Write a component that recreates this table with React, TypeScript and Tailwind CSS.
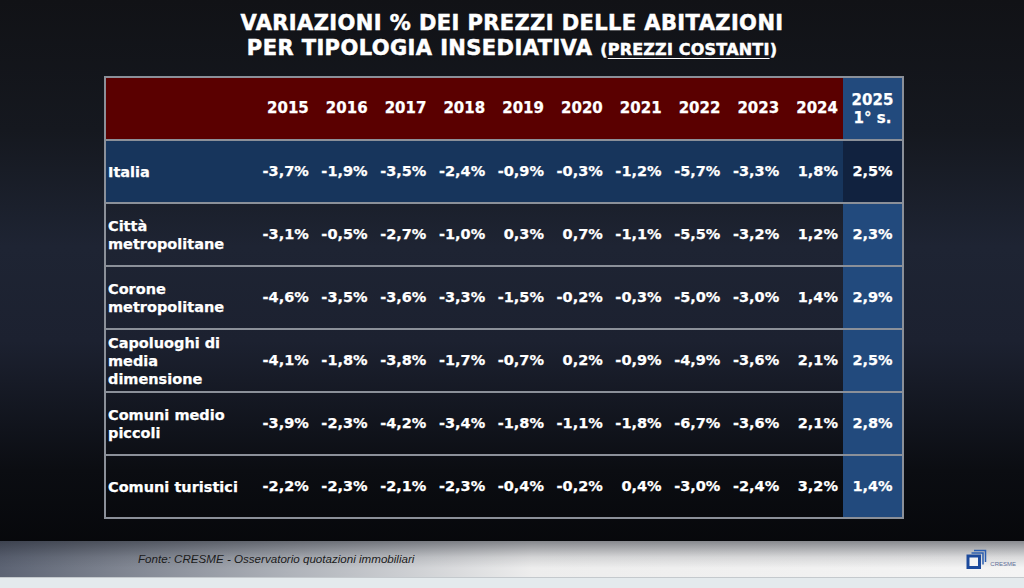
const years = ["2015", "2016", "2017", "2018", "2019", "2020", "2021", "2022", "2023", "2024"];

type Row = { label: React.ReactNode; values: string[]; last: string; highlight?: boolean };

const rows: Row[] = [
  { label: "Italia", values: ["-3,7%", "-1,9%", "-3,5%", "-2,4%", "-0,9%", "-0,3%", "-1,2%", "-5,7%", "-3,3%", "1,8%"], last: "2,5%", highlight: true },
  { label: <>Città<br />metropolitane</>, values: ["-3,1%", "-0,5%", "-2,7%", "-1,0%", "0,3%", "0,7%", "-1,1%", "-5,5%", "-3,2%", "1,2%"], last: "2,3%" },
  { label: <>Corone<br />metropolitane</>, values: ["-4,6%", "-3,5%", "-3,6%", "-3,3%", "-1,5%", "-0,2%", "-0,3%", "-5,0%", "-3,0%", "1,4%"], last: "2,9%" },
  { label: <>Capoluoghi di<br />media<br />dimensione</>, values: ["-4,1%", "-1,8%", "-3,8%", "-1,7%", "-0,7%", "0,2%", "-0,9%", "-4,9%", "-3,6%", "2,1%"], last: "2,5%" },
  { label: <>Comuni medio<br />piccoli</>, values: ["-3,9%", "-2,3%", "-4,2%", "-3,4%", "-1,8%", "-1,1%", "-1,8%", "-6,7%", "-3,6%", "2,1%"], last: "2,8%" },
  { label: "Comuni turistici", values: ["-2,2%", "-2,3%", "-2,1%", "-2,3%", "-0,4%", "-0,2%", "0,4%", "-3,0%", "-2,4%", "3,2%"], last: "1,4%" },
];

function CresmeLogo() {
  return (
    <div className="flex items-end gap-[3px]">
      <svg width="21" height="20" viewBox="0 0 21 20">
        <path d="M8 1.5 H19.5 V13" fill="none" stroke="#2a5db0" strokeWidth="1.5" />
        <path d="M5.5 4 H17 V15.5" fill="none" stroke="#2a5db0" strokeWidth="1.5" />
        <rect x="2" y="7" width="11.5" height="11.5" fill="#f4f4f4" stroke="#1c4a9c" strokeWidth="3" />
      </svg>
      <span className="mb-[2px] font-['Liberation_Sans',sans-serif] text-[6px] leading-none text-[#5f6f98]">CRESME</span>
    </div>
  );
}

export default function App() {
  return (
    <div className="flex h-[588px] w-[1024px] flex-col bg-[linear-gradient(180deg,#111216_0%,#15181f_22%,#1e2433_42%,#1c2130_58%,#0b0d12_80%,#040507_100%)] font-['DejaVu_Sans',sans-serif] text-white">
      <div className="pt-[11px] text-center text-[21px] font-bold leading-[25px] tracking-[0.4px] [-webkit-text-stroke:0.5px_#fff]">
        <div>VARIAZIONI % DEI PREZZI DELLE ABITAZIONI</div>
        <div>
          PER TIPOLOGIA INSEDIATIVA <span className="text-[16px] tracking-[0.2px]">(<span className="underline decoration-1 underline-offset-[3px]">PREZZI COSTANTI</span>)</span>
        </div>
      </div>

      <div className="ml-[104px] mt-[14px] w-[800px] border-2 border-[#8b9099] [-webkit-text-stroke:0.25px_#fff]">
        <div className="grid h-[61px] grid-cols-[149px_repeat(10,1fr)_59px] text-[15px] font-bold">
          <div className="bg-[#5a0000]" />
          {years.map((y) => (
            <div key={y} className="flex items-center justify-end bg-[#5a0000] pr-[5px]">{y}</div>
          ))}
          <div className="flex flex-col items-center justify-center bg-[#224a7d] leading-[18px]">
            <span>2025</span>
            <span>1° s.</span>
          </div>
        </div>
        {rows.map((r, i) => (
          <div key={i} className={`grid h-[63px] grid-cols-[149px_repeat(10,1fr)_59px] border-t-2 border-[#8b9099] text-[14.5px] font-bold ${r.highlight ? "bg-[#17355c]" : ""}`}>
            <div className="flex items-center pl-[2px] leading-[18px]">
              <span>{r.label}</span>
            </div>
            {r.values.map((v, j) => (
              <div key={j} className="flex items-center justify-end pr-[5px]">{v}</div>
            ))}
            <div className={`flex items-center justify-center ${r.highlight ? "bg-[#11223f]" : "bg-[#224a7d]"}`}>{r.last}</div>
          </div>
        ))}
      </div>

      <div className="flex-1" />

      <div className="flex h-[36px] items-center justify-between bg-[linear-gradient(180deg,rgba(30,34,44,0.5)_0%,rgba(30,34,44,0.12)_45%,rgba(30,34,44,0)_75%),linear-gradient(90deg,#5c6373_0%,#aeb2b9_28%,#ededed_52%,#f4f4f4_100%)] pl-[138px] pr-[8px]">
        <span className="font-['Liberation_Sans',sans-serif] text-[11.6px] italic text-[#1b1b1b]">Fonte: CRESME - Osservatorio quotazioni immobiliari</span>
        <CresmeLogo />
      </div>
      <div className="h-[11px] border-t border-[#c4c9cd] bg-[#e4eaed]" />
    </div>
  );
}
